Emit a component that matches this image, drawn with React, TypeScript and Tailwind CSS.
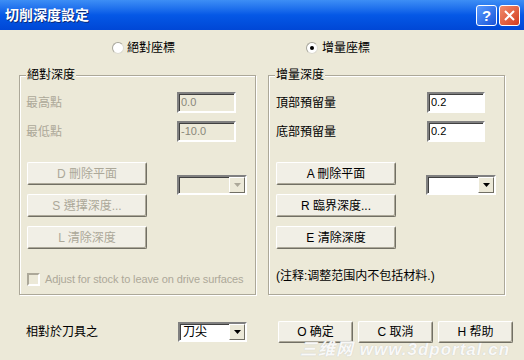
import type { ReactNode } from "react";

function Arrow({ disabled }: { disabled?: boolean }) {
  return (
    <svg width="7" height="4" viewBox="0 0 7 4">
      <polygon points="0,0 7,0 3.5,4" fill={disabled ? "#ACA899" : "#000"} />
    </svg>
  );
}

function Btn({ children, disabled, className = "" }: { children: ReactNode; disabled?: boolean; className?: string }) {
  return (
    <div
      className={`flex items-center justify-center rounded-[2px] border border-t-white border-l-white border-r-[#716F64] border-b-[#716F64] bg-[#F1EFE6] shadow-[inset_-1px_-1px_0_#ACA899] text-[12px] ${
        disabled ? "text-[#ACA899]" : "text-black"
      } ${className}`}
    >
      {children}
    </div>
  );
}

function Field({ value, disabled, className = "" }: { value: string; disabled?: boolean; className?: string }) {
  return (
    <div
      className={`h-[21px] border-2 border-t-[#808080] border-l-[#808080] border-r-white border-b-white shadow-[inset_1px_1px_0_#404040] pl-[2px] flex items-center text-[11px] ${
        disabled ? "bg-[#ECE9D8] text-[#8A877A]" : "bg-white text-black"
      } ${className}`}
    >
      {value}
    </div>
  );
}

function Combo({ value = "", disabled, className = "" }: { value?: string; disabled?: boolean; className?: string }) {
  return (
    <div
      className={`h-[20px] border-2 border-t-[#808080] border-l-[#808080] border-r-white border-b-white shadow-[inset_1px_1px_0_#404040] flex items-stretch ${
        disabled ? "bg-[#ECE9D8]" : "bg-white"
      } ${className}`}
    >
      <div className="flex-1 pl-[3px] flex items-center text-[12px]">{value}</div>
      <div className="w-[16px] flex items-center justify-center border border-t-white border-l-white border-r-[#716F64] border-b-[#716F64] bg-[#ECE9D8]">
        <Arrow disabled={disabled} />
      </div>
    </div>
  );
}

function Radio({ checked }: { checked?: boolean }) {
  return (
    <div className="w-[12px] h-[12px] rounded-full bg-white border border-[#A7A69B] border-r-[#DDDBD0] border-b-[#DDDBD0] flex items-center justify-center">
      {checked && <div className="w-[4px] h-[4px] rounded-full bg-black" />}
    </div>
  );
}

function Group({ label, children }: { label: string; children: ReactNode }) {
  return (
    <div className="relative w-[237px] h-[220px] border border-[#ACA899] shadow-[1px_1px_0_#fff,inset_1px_1px_0_#fff]">
      <div className="absolute -top-[9px] left-[6px] bg-[#ECE9D8] px-[1px] text-[12px] leading-[16px]">{label}</div>
      <div className="pt-[16px]">{children}</div>
    </div>
  );
}

export default function App() {
  return (
    <div className="relative w-[524px] h-[360px] overflow-hidden bg-[#ECE9D8] text-black font-['Liberation_Sans','Noto_Sans_CJK_TC',sans-serif] text-[12px]">
      {/* title bar */}
      <div className="h-[30px] flex items-center justify-between pl-[5px] pr-[4px] bg-gradient-to-b from-[#3D8EF5] via-[#0558E6] to-[#0047D6]">
        <span className="text-white font-bold text-[14px] [text-shadow:1px_1px_0_#0A2A7A]">切削深度設定</span>
        <div className="flex gap-[2px]">
          <div className="w-[21px] h-[21px] rounded-[3px] border border-white bg-gradient-to-br from-[#5A9BFF] to-[#1A52D8] flex items-center justify-center text-white font-bold text-[15px] leading-none">
            ?
          </div>
          <div className="w-[21px] h-[21px] rounded-[3px] border border-white bg-gradient-to-br from-[#F08A6A] to-[#D2391B] flex items-center justify-center">
            <svg width="11" height="11" viewBox="0 0 11 11">
              <path d="M1 1 L10 10 M10 1 L1 10" stroke="#fff" strokeWidth="2" />
            </svg>
          </div>
        </div>
      </div>

      {/* radio row */}
      <div className="flex h-[20px] mt-[8px] items-center">
        <div className="w-[306px] pl-[112px] flex items-center gap-[3px]">
          <Radio />
          <span>絕對座標</span>
        </div>
        <div className="flex items-center gap-[4px]">
          <Radio checked />
          <span>增量座標</span>
        </div>
      </div>

      {/* groups */}
      <div className="flex pl-[19px] gap-[12px] mt-[17px]">
        <Group label="絕對深度">
          <div className="pl-[6px] text-[#ACA899]">
            <div className="flex items-center h-[21px]">
              <span className="w-[151px]">最高點</span>
              <Field value="0.0" disabled className="w-[59px]" />
            </div>
            <div className="flex items-center h-[21px] mt-[8px]">
              <span className="w-[151px]">最低點</span>
              <Field value="-10.0" disabled className="w-[59px]" />
            </div>
          </div>
          <div className="flex mt-[20px] pl-[7px]">
            <div className="flex flex-col gap-[9px] w-[120px]">
              <Btn disabled className="h-[23px]">D 刪除平面</Btn>
              <Btn disabled className="h-[23px]">S 選擇深度...</Btn>
              <Btn disabled className="h-[23px]">L 清除深度</Btn>
            </div>
            <Combo disabled className="ml-[30px] mt-[13px] w-[70px]" />
          </div>
          <div className="flex items-center gap-[5px] mt-[22px] pl-[7px]">
            <div className="w-[13px] h-[13px] border-2 border-t-[#ACA899] border-l-[#ACA899] border-r-white border-b-white bg-[#ECE9D8]" />
            <span className="text-[11px] tracking-[-0.12px] text-[#ACA899]">Adjust for stock to leave on drive surfaces</span>
          </div>
        </Group>

        <Group label="增量深度">
          <div className="pl-[7px]">
            <div className="flex items-center h-[21px]">
              <span className="w-[151px]">頂部預留量</span>
              <Field value="0.2" className="w-[58px]" />
            </div>
            <div className="flex items-center h-[21px] mt-[8px]">
              <span className="w-[151px]">底部預留量</span>
              <Field value="0.2" className="w-[58px]" />
            </div>
          </div>
          <div className="flex mt-[20px] pl-[7px]">
            <div className="flex flex-col gap-[9px] w-[120px]">
              <Btn className="h-[23px]">A 刪除平面</Btn>
              <Btn className="h-[23px]">R 臨界深度...</Btn>
              <Btn className="h-[23px]">E 清除深度</Btn>
            </div>
            <Combo className="ml-[30px] mt-[13px] w-[70px]" />
          </div>
          <div className="mt-[19px] pl-[7px] leading-[16px]">(注释:调整范围内不包括材料.)</div>
        </Group>
      </div>

      {/* bottom row */}
      <div className="flex items-center h-[22px] mt-[26px] pl-[26px]">
        <span className="w-[152px]">相對於刀具之</span>
        <Combo value="刀尖" className="w-[69px]" />
        <div className="flex gap-[5px] ml-[31px]">
          <Btn className="w-[75px] h-[22px]">O 确定</Btn>
          <Btn className="w-[75px] h-[22px]">C 取消</Btn>
          <Btn className="w-[75px] h-[22px]">H 帮助</Btn>
        </div>
      </div>

      {/* watermark */}
      <div className="absolute left-[300px] top-[342px] text-white/90 italic font-bold text-[17px] leading-[16px] tracking-[1px] [text-shadow:0_0_1px_#bbb]">
        三维网 www.3dportal.cn
      </div>
    </div>
  );
}
